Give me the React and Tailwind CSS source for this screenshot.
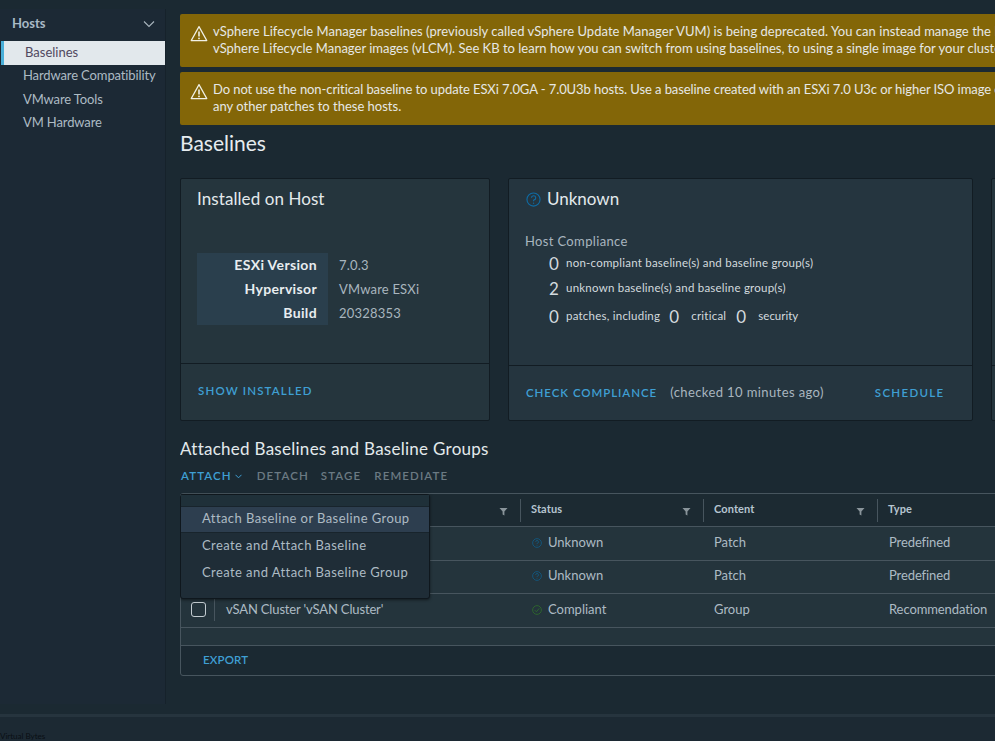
const Warn = () => (
  <svg width="20" height="20" viewBox="0 0 20 20" fill="none" stroke="#f1f1e6" strokeWidth="1.2" className="shrink-0">
    <path d="M10 2.6 L17.8 16.6 H2.2 Z" strokeLinejoin="round" />
    <path d="M10 7.4 V12.4" strokeWidth="1.6" />
    <circle cx="10" cy="14.4" r="0.9" fill="#f1f1e6" stroke="none" />
  </svg>
);
const Filter = () => (
  <svg width="9" height="9" viewBox="0 0 9 9" className="shrink-0"><path d="M0.5 1 H8.5 L5.4 4.6 V8.5 L3.6 7.4 V4.6 Z" fill="#8a959b" /></svg>
);
const Q = ({ size = 10, color = "#0f5f8c" }) => (
  <svg width={size} height={size} viewBox="0 0 16 16" fill="none" stroke={color} strokeWidth="1.2" className="shrink-0">
    <circle cx="8" cy="8" r="7" />
    <path d="M5.8 6.2 A2.3 2.2 0 1 1 8.6 8.4 Q8 8.7 8 9.8" />
    <circle cx="8" cy="11.9" r="0.7" fill={color} stroke="none" />
  </svg>
);
const Ok = () => (
  <svg width="10" height="10" viewBox="0 0 16 16" fill="none" stroke="#2f6b2d" strokeWidth="1.4" className="shrink-0">
    <circle cx="8" cy="8" r="7" />
    <path d="M4.4 8.2 L7 10.8 L11.6 5.4" />
  </svg>
);
const Link = ({ className = "", children }) => (
  <span className={"text-[11.5px] font-semibold text-[#3f9fd3] whitespace-nowrap " + className}>{children}</span>
);
const rows = [
  { name: "", status: "Unknown", content: "Patch", type: "Predefined", h: "h-[34px]" },
  { name: "", status: "Unknown", content: "Patch", type: "Predefined", h: "h-[33px]" },
  { name: "vSAN Cluster 'vSAN Cluster'", status: "Compliant", content: "Group", type: "Recommendation", h: "h-[34px]" },
];
const Head = ({ w, label, filter = true }) => (
  <div className={"relative flex h-full shrink-0 " + w}>
    <div className="mt-[5px] h-[23px] w-px bg-[#47555e]" />
    <span className="ml-[10px] mt-[7px] text-[11px] font-bold tracking-[0.1px] text-[#b6c5d0]">{label}</span>
    {filter && <div className="ml-auto mr-[12px] mt-[13px]"><Filter /></div>}
  </div>
);

export default function App() {
  return (
    <div className="relative flex h-[741px] w-[995px] flex-col overflow-hidden bg-[#1b2932] text-[#adbbc4]" style={{ fontFamily: "Lato, 'Open Sans', sans-serif" }}>
      <div className="flex h-[714px] shrink-0">
        <aside className="mt-[9px] h-[695px] w-[166px] shrink-0 border-r border-[#16222b] bg-[#1c2935]">
          <div className="flex h-[32px] items-center justify-between pb-[2px] pl-[12px] pr-[10px]">
            <span className="text-[13px] font-bold text-[#a9bac6]">Hosts</span>
            <svg width="12" height="8" viewBox="0 0 12 8" fill="none" stroke="#a9b5bd" strokeWidth="1.1"><path d="M1 1.5 L6 6.5 L11 1.5" /></svg>
          </div>
          <div className="ml-px flex h-[24px] w-[164px] items-center border-l-[3px] border-[#49afd9] bg-[#e2e8ec] pl-[21px] text-[13px] text-[#51485f]">Baselines</div>
          <div className="pl-[23px] text-[13px] tracking-[-0.12px]">
            <div className="flex h-[21px] items-center whitespace-nowrap">Hardware Compatibility</div>
            <div className="flex h-[27px] items-center">VMware Tools</div>
            <div className="flex h-[19px] items-center">VM Hardware</div>
          </div>
        </aside>
        <main className="ml-[14px] min-w-0 flex-1 overflow-hidden pt-[14px]">
          <div className="w-[1100px] space-y-[5px] text-[13px] text-[#e6e8e6]">
            <div className="flex h-[53px] gap-[4px] rounded-[2px] bg-[#836608] pl-[9px] pt-[9px]">
              <div className="mt-[1px]"><Warn /></div>
              <div className="leading-[17px] whitespace-nowrap">
                <div className="tracking-[0.04px]">vSphere Lifecycle Manager baselines (previously called vSphere Update Manager VUM) is being deprecated. You can instead manage the lifecycle of hosts using</div>
                <div>vSphere Lifecycle Manager images (vLCM). See KB to learn how you can switch from using baselines, to using a single image for your cluster.</div>
              </div>
            </div>
            <div className="flex h-[53px] gap-[4px] rounded-[2px] bg-[#836608] pl-[9px] pt-[9px]">
              <div className="mt-[1px]"><Warn /></div>
              <div className="leading-[17px] whitespace-nowrap">
                <div className="tracking-[-0.085px]">Do not use the non-critical baseline to update ESXi 7.0GA - 7.0U3b hosts. Use a baseline created with an ESXi 7.0 U3c or higher ISO image or apply</div>
                <div>any other patches to these hosts.</div>
              </div>
            </div>
          </div>
          <h1 className="mt-[6px] h-[47px] text-[21px] leading-[24px] text-[#e6ecef]">Baselines</h1>

          <div className="flex h-[243px] w-[900px] gap-[18px]">
            <section className="flex h-full w-[310px] shrink-0 flex-col rounded-[2px] border border-[#121c23] bg-[#25353d]">
              <div className="h-[185px] shrink-0 border-b border-[#121c23] pl-[16px] pt-[9px]">
                <div className="text-[17px] leading-[22px] tracking-[0.08px] text-[#e3e9ec]">Installed on Host</div>
                <div className="mt-[43px] flex">
                  <div className="flex w-[131px] flex-col items-end bg-[#2a3f4d] pr-[11px] text-[14px] font-bold leading-[24px] tracking-[0.35px] text-[#e8edf0]">
                    <div>ESXi Version</div><div>Hypervisor</div><div>Build</div>
                  </div>
                  <div className="pl-[11px] text-[13px] leading-[24px] tracking-[0.2px] text-[#a9b6bf]">
                    <div>7.0.3</div><div>VMware ESXi</div><div>20328353</div>
                  </div>
                </div>
              </div>
              <div className="flex flex-1 items-center pb-[2px] pl-[17px]"><Link className="tracking-[1.15px]">SHOW INSTALLED</Link></div>
            </section>

            <section className="flex h-full w-[465px] shrink-0 flex-col rounded-[2px] border border-[#121c23] bg-[#25353f]">
              <div className="h-[187px] shrink-0 border-b border-[#121c23] pl-[16px] pt-[9px]">
                <div className="flex h-[22px] items-center gap-[6px] pl-[1px]">
                  <Q size={15} color="#0f6ba3" />
                  <span className="text-[17px] text-[#e3e9ec]">Unknown</span>
                </div>
                <div className="mt-[21px] text-[13px] leading-[20px] tracking-[0.35px] text-[#a9b6bf]">Host Compliance</div>
                <div className="pl-[24px] text-[11.5px] tracking-[0.23px] text-[#d3dade]">
                  <div className="flex h-[24px] items-center gap-[7px]"><span className="w-[10px] text-[17px] leading-none">0</span>non-compliant baseline(s) and baseline group(s)</div>
                  <div className="flex h-[26px] items-center gap-[7px]"><span className="w-[10px] text-[17px] leading-none">2</span>unknown baseline(s) and baseline group(s)</div>
                  <div className="flex h-[30px] items-center gap-[7px]">
                    <span className="w-[10px] text-[17px] leading-none">0</span>
                    <span>patches, including</span>
                    <span className="ml-[2px] w-[10px] text-[17px] leading-none">0</span>
                    <span className="ml-[5px]">critical</span>
                    <span className="ml-[3px] w-[10px] text-[17px] leading-none">0</span>
                    <span className="ml-[5px] tracking-[0px]">security</span>
                  </div>
                </div>
              </div>
              <div className="flex flex-1 items-center pl-[17px]">
                <Link className="tracking-[0.95px]">CHECK COMPLIANCE</Link>
                <span className="ml-[13px] text-[13px] tracking-[0.4px] text-[#a9b6bf]">(checked 10 minutes ago)</span>
                <Link className="ml-[51px] tracking-[1.3px]">SCHEDULE</Link>
              </div>
            </section>

            <section className="flex h-full w-[200px] shrink-0 flex-col rounded-[2px] border border-[#121c23] bg-[#25353d]">
              <div className="h-[187px] shrink-0 border-b border-[#121c23]" />
            </section>
          </div>

          <h2 className="mt-[17px] text-[17px] leading-[22px] tracking-[0.27px] text-[#e3e9ec]">Attached Baselines and Baseline Groups</h2>
          <div className="mt-[5px] flex h-[22px] items-center pl-px text-[11.5px] font-semibold tracking-[1.1px]">
            <span className="text-[#3f9fd3]">ATTACH</span>
            <svg width="7" height="5" viewBox="0 0 7 5" fill="none" stroke="#3f9fd3" strokeWidth="1" className="ml-[3px]"><path d="M0.5 0.8 L3.5 3.8 L6.5 0.8" /></svg>
            <span className="ml-[15px] text-[#6b7a83]">DETACH</span>
            <span className="ml-[12px] text-[#6b7a83]">STAGE</span>
            <span className="ml-[13px] text-[#6b7a83]">REMEDIATE</span>
          </div>

          <div className="relative mt-[6px] h-[183px] w-[900px] rounded-[3px] border border-[#47555e]">
            <div className="flex h-[33px] border-b border-[#47555e] bg-[#1c2a32]">
              <div className="w-[339px] shrink-0 flex"><div className="ml-auto mr-[12px] mt-[13px]"><Filter /></div></div>
              <Head w="w-[183px]" label="Status" />
              <Head w="w-[174px]" label="Content" />
              <Head w="w-[200px]" label="Type" filter={false} />
            </div>
            {rows.map((r, i) => (
              <div key={i} className={"flex items-center border-b border-[#47555e] bg-[#24343c] pb-[2px] text-[13px] " + r.h}>
                <div className="flex h-full w-[339px] shrink-0 items-center pl-[10px]">
                  <div className="h-[15px] w-[15px] rounded-[3px] border border-[#c3ccd1]" />
                  <div className="ml-[8px] h-[22px] w-px bg-[#47555e]" />
                  <span className="ml-[11px] whitespace-nowrap tracking-[-0.15px]">{r.name}</span>
                </div>
                <div className="flex w-[183px] shrink-0 items-center gap-[6px] pl-[12px]">
                  {r.status === "Compliant" ? <Ok /> : <Q />}
                  <span>{r.status}</span>
                </div>
                <div className="w-[174px] shrink-0 pl-[11px]">{r.content}</div>
                <div className="pl-[12px] whitespace-nowrap tracking-[-0.1px]">{r.type}</div>
              </div>
            ))}
            <div className="h-[18px] border-b border-[#47555e] bg-[#24343c]" />
            <div className="flex h-[30px] items-center pb-[3px] pl-[22px] text-[11.5px] font-semibold tracking-[0.15px] text-[#3f9fd3]">EXPORT</div>

            <div className="absolute -left-px top-0 z-10 h-[105px] w-[250px] rounded-[3px] border border-[#0f171d] bg-[#1f2d37] text-[13px] tracking-[0.42px] shadow-[0_1px_3px_rgba(0,0,0,0.5)]">
              <div className="h-[11px] bg-[#1f3039]" />
              <div className="flex h-[27px] items-center border-y border-[#18242c] bg-[#2d3e4f] pb-[2px] pl-[21px] text-[#adbbc4]">Attach Baseline or Baseline Group</div>
              <div className="flex h-[26px] items-center pl-[21px]">Create and Attach Baseline</div>
              <div className="flex h-[27px] items-center pl-[21px]">Create and Attach Baseline Group</div>
            </div>
          </div>
        </main>
      </div>
      <div className="h-[3px] shrink-0 bg-[#26343e]" />
      <div className="flex-1 bg-[#1c2933]" />
      <div className="absolute bottom-0 left-0 text-[8px] leading-[9px] text-[#0a0f13]">Virtual Bytes</div>
    </div>
  );
}
